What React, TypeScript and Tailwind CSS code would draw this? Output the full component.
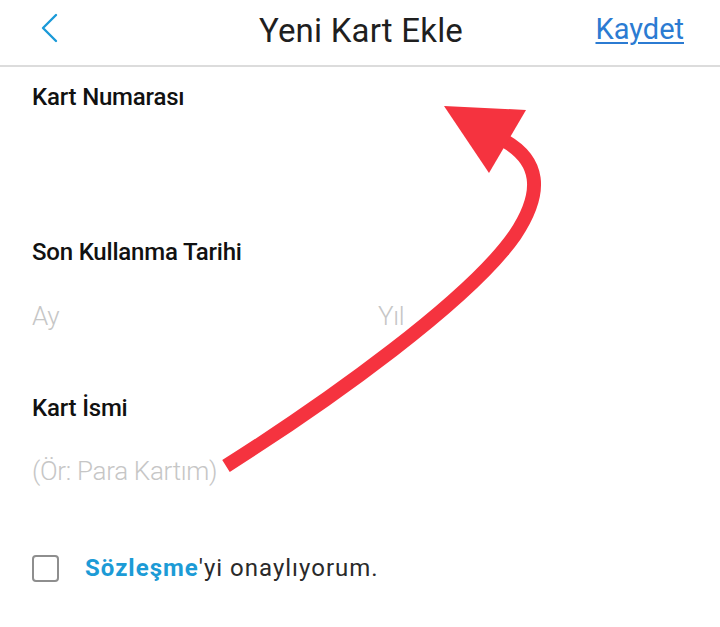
const label = "block text-[24px] font-medium text-[#111] leading-[30px] tracking-[-0.2px]";
const placeholder = "text-[26px] font-light text-[#c6c6c6] leading-[30px] tracking-[-0.3px]";

const App = () => {
  return (
    <div className="relative w-[720px] h-[627px] bg-white overflow-hidden font-['Roboto',sans-serif]">
      {/* Header */}
      <header className="h-[67px] grid grid-cols-[1fr_auto_1fr] items-center border-b-2 border-[#dcdcdc] pl-[38px] pr-[36px]">
        <button className="h-[40px] flex items-center mb-[10px]">
          <svg width="24" height="30" viewBox="0 0 24 30" fill="none">
            <polyline points="18,2 5,15 18,28" stroke="#1b9ad8" strokeWidth="2.4" strokeLinecap="round" strokeLinejoin="round" />
          </svg>
        </button>
        <h1 className="text-[33px] text-[#1f1f1f] tracking-[0.2px] pb-[4px]">Yeni Kart Ekle</h1>
        <a href="#" className="justify-self-end text-[29px] text-[#2b7bd2] underline underline-offset-[3px] decoration-[1.5px] pb-[5px]">
          Kaydet
        </a>
      </header>

      <main className="px-[32px]">
        {/* Kart Numarası */}
        <div className="pt-[15px] h-[161px]">
          <label className={label}>Kart Numarası</label>
        </div>

        {/* Son Kullanma Tarihi */}
        <div className="pt-[9px]">
          <label className={label}>Son Kullanma Tarihi</label>
          <div className={`flex mt-[34px] ${placeholder}`}>
            <span className="w-[346px]">Ay</span>
            <span>Yıl</span>
          </div>
        </div>

        {/* Kart İsmi */}
        <div className="pt-[62px]">
          <label className={label}>Kart İsmi</label>
          <div className={`mt-[33px] ${placeholder}`}>(Ör: Para Kartım)</div>
        </div>

        {/* Sözleşme */}
        <div className="flex items-center gap-[26px] mt-[64px]">
          <span className="w-[27px] h-[27px] rounded-[4px] border-2 border-[#8e8e8e]" />
          <p className="text-[24px] text-[#2a2a2a] tracking-[1px]">
            <span className="font-bold text-[#1c9bd6]">Sözleşme</span>'yi onaylıyorum.
          </p>
        </div>
      </main>

      {/* Red annotation arrow */}
      <svg className="absolute inset-0 pointer-events-none" width="720" height="627" viewBox="0 0 720 627">
        <path
          d="M226 466 C 330 400 470 300 515 235 C 545 190 538 160 505 141"
          fill="none"
          stroke="#f5333f"
          strokeWidth="14"
        />
        <polygon points="444,106 526,110 489,173" fill="#f5333f" />
      </svg>
    </div>
  );
};

export default App;
